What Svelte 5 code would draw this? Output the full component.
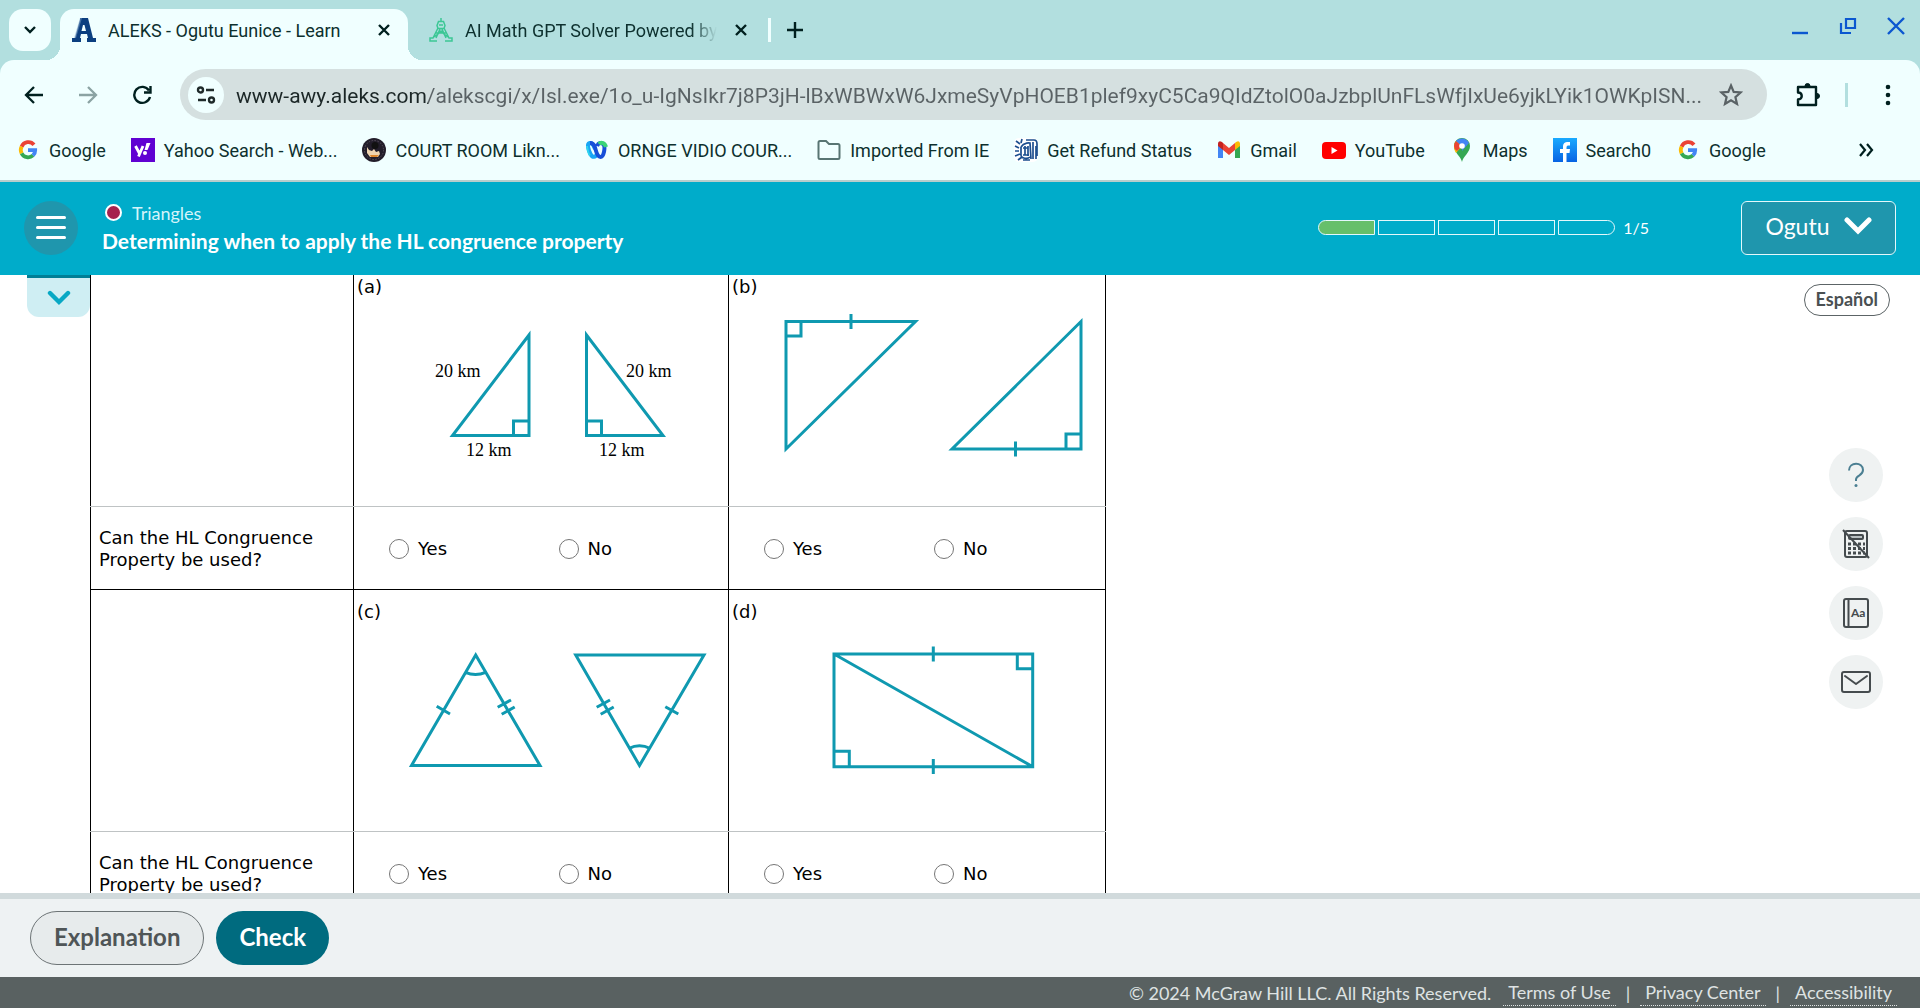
<script lang="ts">
  interface Problem {
    id: string;
    answer: string;
  }

  // two problems per table row
  let rows: Problem[][] = [
    [{ id: 'a', answer: '' }, { id: 'b', answer: '' }],
    [{ id: 'c', answer: '' }, { id: 'd', answer: '' }]
  ];

  const bookmarks = [
    { icon: 'google', label: 'Google' },
    { icon: 'yahoo', label: 'Yahoo Search - Web...' },
    { icon: 'court', label: 'COURT ROOM Likn...' },
    { icon: 'webex', label: 'ORNGE VIDIO COUR...' },
    { icon: 'folder', label: 'Imported From IE' },
    { icon: 'irs', label: 'Get Refund Status' },
    { icon: 'gmail', label: 'Gmail' },
    { icon: 'youtube', label: 'YouTube' },
    { icon: 'maps', label: 'Maps' },
    { icon: 'facebook', label: 'Search0' },
    { icon: 'google', label: 'Google' }
  ];

  let url = 'www-awy.aleks.com/alekscgi/x/Isl.exe/1o_u-IgNsIkr7j8P3jH-lBxWBWxW6JxmeSyVpHOEB1plef9xyC5Ca9QIdZtolO0aJzbplUnFLsWfjIxUe6yjkLYik1OWKpISN...';
  let done = 1;
  const total = 5;
</script>

<div class="window">
  <div class="tab-strip">
    <button class="tab-search" aria-label="Search tabs">
      <svg width="14" height="10" viewBox="0 0 14 10"><path d="M2 2l5 5 5-5" fill="none" stroke="#00201f" stroke-width="2.4" /></svg>
    </button>
    <div class="tab active">
      <svg width="24" height="24" viewBox="0 0 24 24">
        <path fill="#0b3f80" fill-rule="evenodd" d="M8 0h8l5 20h3v4h-9v-4h1l-1-4H9l-1 4h1v4H0v-4h3L8 2zM11 7l-1.500 6h4.500L12.500 7z" />
        <path fill="#7fa3c8" d="M8 0h2L4 20H2z" opacity=".5" />
      </svg>
      <span class="tab-title">ALEKS - Ogutu Eunice - Learn</span>
      <button class="tab-close" aria-label="Close tab">
        <svg width="14" height="14" viewBox="0 0 14 14"><path d="M2 2l10 10M12 2L2 12" stroke="#00201f" stroke-width="2.400" /></svg>
      </button>
    </div>
    <div class="tab">
      <svg width="24" height="24" viewBox="0 0 24 24" fill="none" stroke="#3cc795" stroke-width="1.500">
        <path d="M12 0v4M9.500 3.500h5l1.500 4-1 3H9l-1-3zM9 10L4 20H1v3h7M15 10l5 10h3v3h-7M11 11L7 20M13 11l4 9M7 15l10 0M5 19l4-3 3-3 3 3 4 3M10 7h4" />
      </svg>
      <span class="tab-title faded">AI Math GPT Solver Powered by</span>
      <button class="tab-close" aria-label="Close tab">
        <svg width="14" height="14" viewBox="0 0 14 14"><path d="M2 2l10 10M12 2L2 12" stroke="#00201f" stroke-width="2.400" /></svg>
      </button>
    </div>
    <span class="tab-divider"></span>
    <button class="new-tab" aria-label="New tab">
      <svg width="16" height="16" viewBox="0 0 16 16"><path d="M8 0v16M0 8h16" stroke="#00201f" stroke-width="2.400" /></svg>
    </button>
    <div class="window-controls">
      <button aria-label="Minimize"><svg width="18" height="18" viewBox="0 0 18 18"><path d="M1 16h16" stroke="#0b57d0" stroke-width="2.400" /></svg></button>
      <button aria-label="Restore">
        <svg width="18" height="18" viewBox="0 0 18 18" fill="none" stroke="#0b57d0" stroke-width="2.200"><path d="M7 2h9v9H7zM2 6v10h10" /></svg>
      </button>
      <button aria-label="Close"><svg width="18" height="18" viewBox="0 0 18 18"><path d="M1 1l16 16M17 1L1 17" stroke="#0b57d0" stroke-width="2.400" /></svg></button>
    </div>
  </div>

  <div class="browser-bar">
    <div class="toolbar">
      <button class="nav" aria-label="Back">
        <svg width="20" height="20" viewBox="0 0 20 20" fill="none" stroke="#00201f" stroke-width="2.300"><path d="M19 10H2M10 2l-8 8 8 8" /></svg>
      </button>
      <button class="nav" aria-label="Forward">
        <svg width="20" height="20" viewBox="0 0 20 20" fill="none" stroke="#8ba3a3" stroke-width="2.300"><path d="M1 10h17M10 2l8 8-8 8" /></svg>
      </button>
      <button class="nav" aria-label="Reload">
        <svg width="20" height="20" viewBox="0 0 20 20" fill="none" stroke="#00201f" stroke-width="2.400"><path d="M17 5.500A8 8 0 1 0 18 12M18.500 1v6.500H12" /></svg>
      </button>
      <div class="address">
        <button class="site-info" aria-label="View site information">
          <svg width="20" height="18" viewBox="0 0 20 18" fill="none" stroke="#1f2a2a" stroke-width="2.400"><circle cx="4.500" cy="4" r="2.500" /><path d="M10 4h8M2 14h8" /><circle cx="15.500" cy="14" r="2.500" /></svg>
        </button>
        <input class="url" type="text" aria-label="Address and search bar" bind:value={url} />
        <button class="star" aria-label="Bookmark this tab">
          <svg width="24" height="24" viewBox="0 0 24 24" fill="none" stroke="#5a6265" stroke-width="2.200"><path d="M12 2.500l2.700 6.400 6.900.6-5.200 4.600 1.600 6.800-6-3.600-6 3.600 1.600-6.800L2.400 9.500l6.900-.6z" /></svg>
        </button>
      </div>
      <button class="extensions" aria-label="Extensions">
        <svg width="26" height="26" viewBox="0 0 26 26" fill="none" stroke="#00201f" stroke-width="2.400" stroke-linejoin="round">
          <path d="M3 5h18v18H3v-5.500c5 0 5-7 0-7z" /><path d="M10 4a2.500 2.500 0 0 1 5 0zM22 11.500a2.500 2.500 0 0 1 0 5z" fill="#00201f" stroke-width="1" />
        </svg>
      </button>
      <span class="bar-divider"></span>
      <button class="menu" aria-label="Customize and control">
        <svg width="6" height="22" viewBox="0 0 6 22" fill="#00201f"><circle cx="3" cy="3" r="2.300" /><circle cx="3" cy="11" r="2.300" /><circle cx="3" cy="19" r="2.300" /></svg>
      </button>
    </div>

    <nav class="bookmarks">
      {#each bookmarks as mark}
        <a href="#{mark.icon}">
          <svg width="24" height="24" viewBox="0 0 24 24">
            {#if mark.icon === 'google'}
              <g fill="none" stroke-width="3.800">
                <path d="M18 6.800A7.300 7.300 0 0 0 5.600 8.700" stroke="#ea4335" />
                <path d="M5.600 8.700a7.300 7.300 0 0 0 0 6.600" stroke="#fbbc05" />
                <path d="M5.600 15.300a7.300 7.300 0 0 0 11.400 2.100" stroke="#34a853" />
                <path d="M17 17.400a7 7 0 0 0 2.200-5.200H12" stroke="#4285f4" />
              </g>
            {:else if mark.icon === 'yahoo'}
              <rect width="24" height="24" fill="#6001d2" />
              <path d="M4.500 8l4 7.500M12 8L7.500 18.500" stroke="#fff" stroke-width="2.800" fill="none" /><path d="M15.500 5h4L16.500 12h-3z" fill="#fff" /><circle cx="14" cy="15" r="2" fill="#fff" />
            {:else if mark.icon === 'court'}
              <circle cx="12" cy="12" r="12" fill="#221d2a" /><circle cx="12" cy="12" r="9.500" fill="none" stroke="#57505c" stroke-dasharray="1.500 1.500" />
              <path d="M5 9l2 3 3 1 2-2 2 3 3-1 1 3-2 3H8l-3-4z" fill="#f0d4b0" /><path d="M8 17h9l-2 2H9z" fill="#df872d" /><circle cx="13" cy="7.500" r="3.500" fill="#111" />
            {:else if mark.icon === 'webex'}
              <g fill="none" stroke-width="4">
                <path d="M12 16c-1.500 3.500-4.500 4-6.500 0S1.500 5.500 4.500 5 9 8 10 11" stroke="#19a5f5" />
                <path d="M12 8c1.500-3.500 4.500-4 6.500-1.500S19 19 15.500 19 11 13 10 9.500 7 5 5 5" stroke="#174fd8" />
                <path d="M14 6c2-2.500 6-1 7 3" stroke="#3bd477" />
                <path d="M2 8c.5 4 1.500 8 3 9.500" stroke="#2fd3ee" stroke-width="2" />
              </g>
            {:else if mark.icon === 'folder'}
              <path d="M1.500 4.500Q1.500 3 3 3h6l3 3h9q1.500 0 1.500 1.500v12Q22.500 21 21 21H3q-1.500 0-1.500-1.500z" fill="none" stroke="#587573" stroke-width="2" />
            {:else if mark.icon === 'irs'}
              <rect width="24" height="24" rx="5" fill="#fff" />
              <g fill="none" stroke="#1d4f8f" stroke-width="1.700"><path d="M2 3l4 3M1 8l4 2M1 13l4 0M1 18l5-2M4 22l4-3M8 1L7 5M7 9c3-5 9-4 9-4l1 16M7 9v8c0 4 7 4 9 2M9 10h5M11 8v9M14 8v10M9 17h6M12 2h8q3 0 3 4v12M19 4v17M22 8v13M9 22h7" /></g>
            {:else if mark.icon === 'gmail'}
              <path d="M1 4.500V20h5V11z" fill="#4285f4" /><path d="M18 11v9h5V5z" fill="#34a853" /><path d="M1 6q0-4 4-2l1 1v7L1 8z" fill="#c5221f" /><path d="M18 5l1-1q4-2 4 2v2l-5 4z" fill="#fbbc04" /><path d="M6 5l6 5 6-5v7l-6 5-6-5z" fill="#ea4335" />
            {:else if mark.icon === 'youtube'}
              <rect y="4" width="24" height="17" rx="4" fill="#f00" /><path d="M9.500 9l6 3.500-6 3.500z" fill="#fff" />
            {:else if mark.icon === 'maps'}
              <path d="M12 24c-1-6-8-9-8-16a8 8 0 0 1 16 0c0 7-7 10-8 16z" fill="#34a853" /><path d="M4 8a8 8 0 0 1 2-5l6 5-6 7q-2-3-2-7z" fill="#fbbc04" /><path d="M6 3l6 5-5 5q-3-2-3-5 0-3 2-5z" fill="#ea4335" /><path d="M6 3a8 8 0 0 1 13 2l-7 8V8z" fill="#4285f4" /><circle cx="12" cy="8" r="2.800" fill="#fff" />
            {:else if mark.icon === 'facebook'}
              <linearGradient id="fb" x1="0" y1="0" x2="0" y2="1"><stop offset="0" stop-color="#19aaff" /><stop offset="1" stop-color="#0763e3" /></linearGradient>
              <rect width="24" height="24" fill="url(#fb)" /><path d="M10 24v-9H7v-4h3V9c0-4 2-5 5-5h2v3.500h-2q-1.500 0-1.500 2V11H17l-.5 4h-3v9z" fill="#fff" />
            {/if}
          </svg>
          {mark.label}
        </a>
      {/each}
      <button class="more" aria-label="More bookmarks">
        <svg width="16" height="14" viewBox="0 0 16 14" fill="none" stroke="#00201f" stroke-width="2.200"><path d="M2 1l5 6-5 6M9 1l5 6-5 6" /></svg>
      </button>
    </nav>
  </div>

  <header>
    <button class="hamburger" aria-label="Menu"><span></span><span></span><span></span></button>
    <div class="titles">
      <div class="topic"><span class="dot"></span>Triangles</div>
      <h1>Determining when to apply the HL congruence property</h1>
    </div>
    <div class="progress">
      <div class="segments">
        {#each Array(total) as _, i}
          <span class="segment" class:filled={i < done}></span>
        {/each}
      </div>
      {done}/{total}
    </div>
    <button class="user">
      Ogutu
      <svg width="28" height="18" viewBox="0 0 28 18"><path d="M3 3l11 11L25 3" fill="none" stroke="#fff" stroke-width="5" stroke-linecap="round" /></svg>
    </button>
  </header>

  <main>
    <div class="gutter">
      <button class="collapse" aria-label="Show question">
        <svg width="24" height="16" viewBox="0 0 24 16"><path d="M3 3l9 9 9-9" fill="none" stroke="#08a8c4" stroke-width="4.400" stroke-linecap="round" /></svg>
      </button>
    </div>

    <table>
      <colgroup>
        <col class="prompt-col" />
        <col class="left-col" />
        <col class="right-col" />
      </colgroup>
      <tbody>
        {#each rows as row}
          <tr class="figures">
            <td></td>
            {#each row as problem}
              <td>
                <div class="letter">({problem.id})</div>
                <svg class="figure" width="370" height="200" viewBox="0 0 370 200">
                  {#if problem.id === 'a'}
                    <path d="M175 37v100.500H98.500zM159.500 137.500V123H175" />
                    <path d="M232.500 37v100.500H309zM247.500 137.500V123h-15" />
                    <text x="81" y="79">20 km</text>
                    <text x="272" y="79">20 km</text>
                    <text x="112" y="158">12 km</text>
                    <text x="245" y="158">12 km</text>
                  {:else if problem.id === 'b'}
                    <path d="M57 23.500h129.500L57 151zM72 23.500V38H57M122 16v15" />
                    <path d="M352 23.500V151H223zM337 151v-15h15M286.500 143.500v15" />
                  {:else if problem.id === 'c'}
                    <path d="M121.700 32L57.500 142.500H186zM111.300 49.300q10.200 4.500 20.400 0M82.700 83.300L96 91M143.700 84.300L157 77M147.700 91.300l13-7.300" />
                    <path d="M221.700 32H350l-64.500 110.500zM275 125.300q10.500-5 21 0M242.700 84.300L256 77M246.700 91.300l13-7.300M311.300 83.700l13 7.300" />
                  {:else}
                    <path d="M105 31h198.700v112.700H105zL303.700 143.700M288.300 31v14.700h15.400M105 128.300h15.300v15.400M204.300 23.500v15M204.300 136v15" />
                  {/if}
                </svg>
              </td>
            {/each}
          </tr>
          <tr class="answers">
            <td class="prompt">Can the HL Congruence Property be used?</td>
            {#each row as problem}
              <td>
                <div class="choices">
                  <label><input type="radio" name="hl-{problem.id}" value="yes" bind:group={problem.answer} />Yes</label>
                  <label><input type="radio" name="hl-{problem.id}" value="no" bind:group={problem.answer} />No</label>
                </div>
              </td>
            {/each}
          </tr>
        {/each}
      </tbody>
    </table>

    <aside>
      <button class="language">Español</button>
      <div class="tools">
        <button aria-label="Help">
          <svg width="30" height="30" viewBox="0 0 30 30"><path d="M8 10.500C8 1.500 22 1.500 22 10c0 6-7 5-7 9.500V21" fill="none" stroke="#4b7f92" stroke-width="2" /><circle cx="15" cy="25.500" r="1.500" fill="#4b7f92" /></svg>
        </button>
        <button aria-label="Calculator not available">
          <svg width="30" height="30" viewBox="0 0 30 30" fill="none" stroke="#454b4e" stroke-width="2">
            <rect x="4" y="2" width="22" height="26" rx="2" /><rect x="8" y="6" width="14" height="4" rx="1" fill="#b9c0c2" />
            <path d="M7 15h3m2 0h3m2 0h3m2 0h2M7 19.500h3m2 0h3m2 0h3m2 0h2M7 24h3m2 0h3m2 0h3m2 0h2" stroke-width="3" /><path d="M2 1l26 28" />
          </svg>
        </button>
        <button aria-label="Dictionary">
          <svg width="30" height="30" viewBox="0 0 30 30" fill="none" stroke="#454b4e" stroke-width="2">
            <rect x="3" y="1" width="24" height="28" rx="2" /><path d="M7.500 1v28" /><text x="10" y="19" fill="#454b4e" stroke="none" font-size="12" font-weight="700">Aa</text>
          </svg>
        </button>
        <button aria-label="Message">
          <svg width="30" height="22" viewBox="0 0 30 22" fill="none" stroke="#454b4e" stroke-width="2" stroke-linecap="round" stroke-linejoin="round"><rect x="1" y="1" width="28" height="20" rx="2" /><path d="M4 5l11 8 11-8" /></svg>
        </button>
      </div>
    </aside>
  </main>

  <div class="actions">
    <button class="explanation">Explanation</button>
    <button class="check">Check</button>
  </div>

  <footer>
    <span class="copyright">© 2024 McGraw Hill LLC. All Rights Reserved.</span>
    <a href="#terms">Terms of Use</a>
    <span class="bar">|</span>
    <a href="#privacy">Privacy Center</a>
    <span class="bar">|</span>
    <a href="#accessibility">Accessibility</a>
  </footer>
</div>

<style>
  :global(body) {
    margin: 0;
  }

  .window {
    display: flex;
    flex-direction: column;
    height: 100vh;
    background: #fff;
    font-family: Lato, "Open Sans", sans-serif;
  }

  button {
    display: flex;
    align-items: center;
    justify-content: center;
    padding: 0;
    border: 0;
    background: none;
    font-family: inherit;
    cursor: pointer;
  }

  svg {
    flex: none;
    display: block;
  }

  /* browser chrome */
  .tab-strip {
    display: flex;
    flex: none;
    height: 60px;
    padding: 0 15px 0 9px;
    background: #b2dfdf;
    color: #0d302e;
    font: 18px Roboto, sans-serif;
  }

  .tab-search {
    width: 42px;
    height: 42px;
    margin: 9px 9px 0 0;
    border-radius: 14px;
    background: #f0ffff;
  }

  .tab {
    position: relative;
    display: flex;
    align-items: center;
    box-sizing: border-box;
    width: 348px;
    height: 51px;
    margin-top: 9px;
    padding: 0 17px 9px 12px;
    border-radius: 14px 14px 0 0;
  }

  .tab:not(.active) {
    margin-left: 8px;
    padding: 0 16px 9px 13px;
  }

  .active {
    background: #f0ffff;
  }

  .active::before,
  .active::after {
    content: '';
    position: absolute;
    bottom: 0;
    width: 14px;
    height: 14px;
  }

  .active::before {
    left: -14px;
    background: radial-gradient(circle at 0 0, transparent 14px, #f0ffff 14px);
  }

  .active::after {
    right: -14px;
    background: radial-gradient(circle at 100% 0, transparent 14px, #f0ffff 14px);
  }

  .tab-title {
    flex: 1;
    margin: 0 18px 0 12px;
    white-space: nowrap;
  }

  .tab-title.faded {
    margin-right: 12px;
    -webkit-mask-image: linear-gradient(90deg, #000 88%, transparent 98%);
    mask-image: linear-gradient(90deg, #000 88%, transparent 98%);
  }

  .tab-divider {
    width: 3px;
    height: 24px;
    margin: 18px 16px 0 4px;
    background: #f0ffff;
  }

  .new-tab {
    height: 60px;
  }

  .window-controls {
    display: flex;
    gap: 30px;
    height: 52px;
    margin-left: auto;
  }

  .browser-bar {
    flex: none;
    background: linear-gradient(#b2dfdf 14px, #f0ffff 14px);
    border-bottom: 2px solid #b9cdcc;
  }

  .toolbar {
    display: flex;
    align-items: center;
    padding: 9px 29px 0 24px;
    border-radius: 14px 14px 0 0;
    background: #f0ffff;
  }

  .nav {
    margin-right: 34px;
  }

  .address {
    display: flex;
    flex: 1;
    align-items: center;
    min-width: 0;
    height: 51px;
    margin-left: -6px;
    padding: 0 24px 0 8px;
    border-radius: 26px;
    background: #d5e0e0;
  }

  .site-info {
    flex: none;
    width: 36px;
    height: 36px;
    border-radius: 50%;
    background: #f0ffff;
  }

  .url {
    flex: 1;
    min-width: 0;
    margin: 0 16px 0 12px;
    padding: 2px 0 0;
    border: 0;
    outline: 0;
    /* host part is darker than the path */
    background: linear-gradient(90deg, #1b2626 192px, #5a6265 192px);
    -webkit-background-clip: text;
    background-clip: text;
    -webkit-text-fill-color: transparent;
    font: 21px/30px Roboto, sans-serif;
  }

  .extensions {
    margin: 0 24px 0 28px;
  }

  .bar-divider {
    width: 3px;
    height: 24px;
    margin-right: 37px;
    background: #b2dfdf;
  }

  .bookmarks {
    display: flex;
    align-items: center;
    gap: 25px;
    height: 60px;
    padding: 0 46px 0 16px;
    font: 18px Roboto, sans-serif;
  }

  .bookmarks a {
    display: flex;
    align-items: center;
    gap: 9px;
    color: #0d302e;
    text-decoration: none;
    white-space: nowrap;
  }

  .more {
    margin-left: auto;
  }

  /* lesson header */
  header {
    display: flex;
    flex: none;
    align-items: center;
    box-sizing: border-box;
    height: 93px;
    padding: 0 24px 2px;
    background: #00acca;
    color: #fff;
  }

  .hamburger {
    flex-direction: column;
    gap: 7px;
    width: 54px;
    height: 54px;
    border-radius: 50%;
    background: #1f96ad;
  }

  .hamburger span {
    width: 30px;
    height: 3px;
    border-radius: 2px;
    background: #fff;
  }

  .titles {
    margin-left: 24px;
  }

  .topic {
    display: flex;
    align-items: center;
    gap: 10px;
    margin-left: 3px;
    color: #d5f4fa;
    font-size: 18px;
    line-height: 24px;
  }

  .dot {
    box-sizing: border-box;
    width: 17px;
    height: 17px;
    border: 2px solid #fff;
    border-radius: 50%;
    background: #a6224e;
  }

  h1 {
    margin: 2px 0 0;
    font-size: 21px;
    font-weight: 700;
    line-height: 28px;
  }

  .progress {
    display: flex;
    align-items: center;
    gap: 8px;
    margin-left: auto;
    font-size: 16px;
  }

  .segments {
    display: flex;
    gap: 3px;
  }

  .segment {
    box-sizing: border-box;
    width: 57px;
    height: 15px;
    border: 1px solid #e4f8fb;
  }

  .segment:first-child {
    border-radius: 8px 0 0 8px;
  }

  .segment:last-child {
    border-radius: 0 8px 8px 0;
  }

  .filled {
    background: #66bf6a;
  }

  .user {
    gap: 14px;
    box-sizing: border-box;
    width: 155px;
    height: 54px;
    margin-left: 92px;
    padding-bottom: 3px;
    border: 1px solid #e4f8fb;
    border-radius: 6px;
    background: #1f96ad;
    color: #fff;
    font-size: 23px;
  }

  /* question area */
  main {
    display: flex;
    flex: 1;
    align-items: flex-start;
    min-height: 0;
    overflow: hidden;
  }

  .gutter {
    flex: none;
    width: 66px;
    padding-left: 24px;
  }

  .collapse {
    width: 63px;
    height: 42px;
    margin-left: 3px;
    border-top: 3px solid #007f96;
    border-radius: 0 0 12px 12px;
    background: #cfeef3;
  }

  table {
    flex: none;
    width: 1016px;
    margin-top: -11px;
    border-collapse: collapse;
    table-layout: fixed;
    font: 18px/22px "DejaVu Sans", Verdana, sans-serif;
  }

  .prompt-col {
    width: 263px;
  }

  .left-col {
    width: 375px;
  }

  td {
    box-sizing: border-box;
    padding: 0;
    border: 1px solid #000;
    vertical-align: top;
  }

  .figures td {
    height: 242px;
    border-bottom-color: #bfc3c4;
  }

  .answers td {
    height: 83px;
    padding-top: 2px;
    border-top-color: #bfc3c4;
    vertical-align: middle;
  }

  .answers .prompt {
    padding: 2px 8px 0;
  }

  .letter {
    padding: 11px 0 0 3px;
  }

  .figure path {
    fill: none;
    stroke: #0f99b0;
    stroke-width: 3;
  }

  .figure text {
    font: 18px "Liberation Serif", serif;
  }

  .choices {
    display: flex;
    padding-left: 35px;
  }

  label {
    display: flex;
    align-items: center;
    gap: 9px;
    width: 170px;
  }

  input[type='radio'] {
    width: 20px;
    height: 20px;
    margin: 0;
  }

  aside {
    display: flex;
    flex: 1;
    flex-direction: column;
    align-items: flex-end;
    padding: 9px 30px 0 0;
  }

  .language {
    height: 32px;
    padding: 0 11px 2px;
    border: 1px solid #5c6466;
    border-radius: 16px;
    color: #4a5052;
    font-size: 18px;
    font-weight: 700;
  }

  .tools {
    display: flex;
    flex-direction: column;
    gap: 15px;
    margin: 132px 7px 0 0;
  }

  .tools button {
    width: 54px;
    height: 54px;
    border-radius: 50%;
    background: #eff2f2;
  }

  .actions {
    display: flex;
    flex: none;
    align-items: center;
    gap: 12px;
    box-sizing: border-box;
    height: 84px;
    padding: 0 30px;
    border-top: 6px solid #d1dadc;
    background: #eef2f3;
  }

  .actions button {
    box-sizing: border-box;
    height: 54px;
    padding: 0 23px 3px;
    border-radius: 27px;
    font-size: 24px;
    font-weight: 700;
  }

  .actions .explanation {
    border: 1px solid #6d7476;
    background: #e7ebec;
    color: #4f5557;
  }

  .actions .check {
    background: #006b7f;
    color: #fff;
  }

  footer {
    display: flex;
    flex: none;
    align-items: center;
    justify-content: flex-end;
    box-sizing: border-box;
    height: 31px;
    padding: 0 23px;
    background: #596161;
    color: #dfe3e3;
    font-size: 18px;
  }

  .copyright {
    margin-right: 12px;
  }

  footer a {
    padding: 0 5px;
    border-bottom: 1px dotted #dfe3e3;
    color: inherit;
    line-height: 26px;
    text-decoration: none;
  }

  .bar {
    margin: 0 10px;
  }
</style>
